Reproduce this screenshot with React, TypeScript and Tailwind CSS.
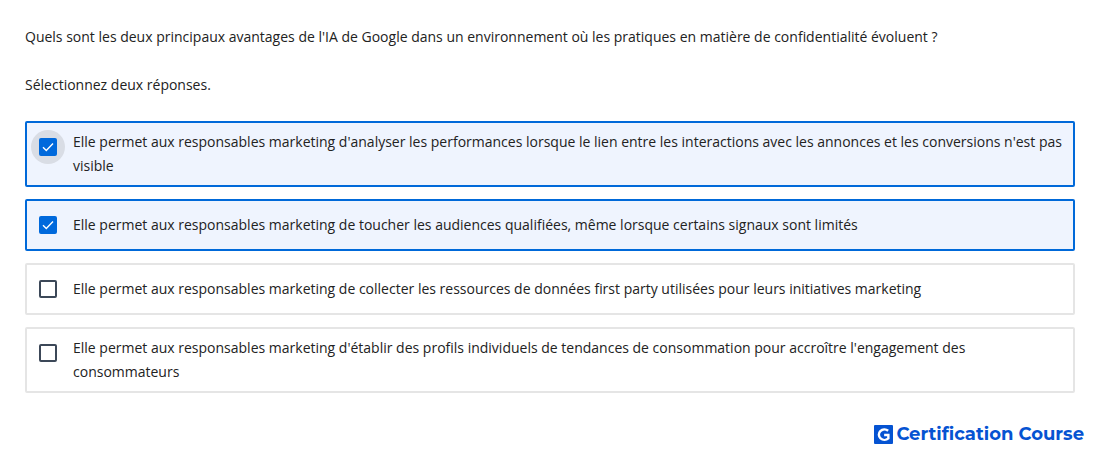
import { useState } from "react";
import clsx from "clsx";

const answers = [
  "Elle permet aux responsables marketing d'analyser les performances lorsque le lien entre les interactions avec les annonces et les conversions n'est pas visible",
  "Elle permet aux responsables marketing de toucher les audiences qualifiées, même lorsque certains signaux sont limités",
  "Elle permet aux responsables marketing de collecter les ressources de données first party utilisées pour leurs initiatives marketing",
  "Elle permet aux responsables marketing d'établir des profils individuels de tendances de consommation pour accroître l'engagement des consommateurs",
];

type AnswerProps = {
  id: string;
  label: string;
  checked: boolean;
  active: boolean;
  onToggle: () => void;
};

function Answer({ id, label, checked, active, onToggle }: AnswerProps) {
  return (
    <li
      className={clsx(
        "flex min-h-13 items-start gap-2 rounded-xs border-2 px-1",
        checked ? "border-[#0069d9] bg-[#eff4fe]" : "border-[#e5e5e5] bg-white",
      )}
    >
      <span
        className={clsx(
          "mt-[7px] grid size-[34px] shrink-0 place-items-center rounded-full",
          active && "bg-[#d9dde5]",
        )}
      >
        <input
          id={id}
          type="checkbox"
          checked={checked}
          onChange={onToggle}
          className="peer col-start-1 row-start-1 size-[18px] appearance-none rounded-xs border-2 border-[#3c4858] bg-white checked:border-[#0069dc] checked:bg-[#0069dc]"
        />
        <svg
          viewBox="0 0 18 18"
          aria-hidden="true"
          className="pointer-events-none col-start-1 row-start-1 hidden size-[18px] peer-checked:block"
        >
          <path d="M4 9.2 7.3 12.5 14 5.6" fill="none" stroke="#fff" strokeWidth="1.4" />
        </svg>
      </span>
      <label htmlFor={id} className="flex-1 self-center py-[7px]">
        {label}
      </label>
    </li>
  );
}

export default function App() {
  const [selected, setSelected] = useState([0, 1]);
  const [active, setActive] = useState(0);

  const toggle = (index: number) => {
    setActive(index);
    setSelected((current) =>
      current.includes(index) ? current.filter((i) => i !== index) : [...current, index],
    );
  };

  return (
    <main className="bg-white pt-[25px] font-['Open_Sans',sans-serif] text-sm/6 text-[#222]">
      <fieldset className="px-[25px]">
        <legend>
          Quels sont les deux principaux avantages de l'IA de Google dans un environnement où les
          pratiques en matière de confidentialité évoluent ?
        </legend>
        <p className="mt-6">Sélectionnez deux réponses.</p>
        <ul className="mt-6 flex flex-col gap-3">
          {answers.map((label, index) => (
            <Answer
              key={label}
              id={`answer-${index}`}
              label={label}
              checked={selected.includes(index)}
              active={active === index}
              onToggle={() => toggle(index)}
            />
          ))}
        </ul>
      </fieldset>
      <footer className="mt-[29px] flex items-center justify-end gap-[3px] pr-4 font-['Montserrat',Inter,sans-serif] text-lg/6 font-bold text-[#0553d2]">
        <svg viewBox="0 0 18 18" aria-hidden="true" className="size-[19px]">
          <rect width="18" height="18" rx="1" fill="#0553d2" />
          <path
            d="M13.4 5.5A5.3 4.9 0 1 0 13.6 12.7V9.4H9.6"
            fill="none"
            stroke="#fff"
            strokeWidth="2.3"
          />
        </svg>
        <span>Certification Course</span>
      </footer>
    </main>
  );
}
